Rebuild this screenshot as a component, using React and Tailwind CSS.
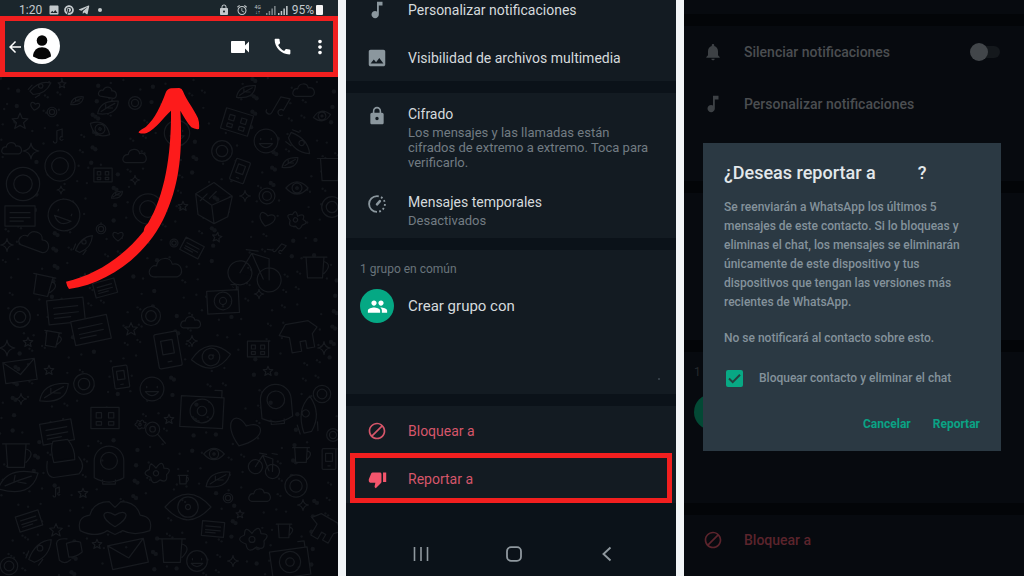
import {
  MdArrowBack, MdVideocam, MdCall, MdMoreVert, MdMusicNote, MdImage, MdLock,
  MdBlock, MdThumbDown, MdGroup, MdNotifications, MdAlarm,
} from "react-icons/md";
import { FaTelegramPlane, FaPinterest } from "react-icons/fa";

/* ---------- chat wallpaper ---------- */

const SHAPES = {
  star: "M0-9L2.5-3 9-2.5 4 2 6 8.500 0 5-6 8.500-4 2-9-2.500-2.500-3z",
  spark: "M0-9Q1-1 9 0Q1 1 0 9Q-1 1-9 0Q-1-1 0-9z",
  heart: "M0 7C-12-1-7-9 0-3C7-9 12-1 0 7z",
  ring: "M-9 0a9 9 0 1 0 18 0a9 9 0 1 0-18 0M-5 0a5 5 0 1 0 10 0a5 5 0 1 0-10 0",
  face: "M-9 0a9 9 0 1 0 18 0a9 9 0 1 0-18 0M-4-2v1M4-2v1M-5 2Q0 8 5 2z",
  cloud: "M-8 5C-13 4-10-3-6-2C-5-8 3-8 4-3C10-5 12 4 7 5z",
  card: "M-9-6h18v12h-18zM-6-2h12M-6 1h12M-6 3h8",
  mail: "M-9-6h18v12h-18zM-9-6L0 2 9-6",
  phone: "M-5-9h10q1 0 1 1v16q0 1-1 1h-10q-1 0-1-1v-16q0-1 1-1zM-3-5h6v7h-6zM-1 6h2",
  camera: "M-9-6h18v13h-18zM-5 0a5 5 0 1 0 10 0a5 5 0 1 0-10 0M-2 0a2 2 0 1 0 4 0a2 2 0 1 0-4 0M5-9h3v3",
  cup: "M-6-6h12l-1 14h-10zM-8-6h16M6-3q6 2 0 8",
  diamond: "M0-9L8-3 6 6 0 9-7 5-8-4zM-8-4L-1 1 8-3M-1 1L0 9M-3-4l-3 3M1-5l-3 3",
  bike: "M-9 3a4 4 0 1 0 8 0a4 4 0 1 0-8 0M1 4a4 4 0 1 0 8 0a4 4 0 1 0-8 0M-5 3L-2-4 4-3 5 4M-2-4l5 8M-4-5h4M3-6h3",
  leaf: "M-9 5Q-7-7 9-6Q8 7-9 5zM-6 3Q0-1 6-4M-2 0v-3M0 0h4",
  eye: "M-9 0Q0-10 9 0Q0 10-9 0zM-4 0a4 4 0 1 0 8 0a4 4 0 1 0-8 0M-1 0a1 1 0 1 0 2 0a1 1 0 1 0-2 0",
  astro: "M-7 7v-8a7 7 0 0 1 14 0v8q-7 4-14 0zM-4-1a4 4 0 1 0 8 0a4 4 0 1 0-8 0M-3 8v2h6v-2",
  hat: "M-4-9h7q3 5 2 10h-10q-1-7 1-10zM-8 0q-2 7 2 8h12q4-3 1-8",
  flower: "M0-3q5-7 6 0q7 0 2 5q1 7-5 4q-6 5-7-2q-8-3-1-6q0-7 5-1zM-2 1a2 2 0 1 0 4 0a2 2 0 1 0-4 0",
  glass: "M-6-2a5 5 0 1 0 10 0a5 5 0 1 0-10 0M-3-2a2 2 0 1 0 4 0a2 2 0 1 0-4 0M3 2l5 6",
  game: "M-8-6h16v12h-16zM-5-3h3v3h-3zM2-3h3v3h-3zM-5 2h3v2h-3zM2 2h3v2h-3z",
  rocket: "M-8 6Q-3-7 8-8Q7 4-4 8zM-2-2a2 2 0 1 0 4 0a2 2 0 1 0-4 0M-8 0l-2 5M2 6l-3 4",
  shirt: "M-6-7h12l4 4-3 3v7h-4v-4h-3v5h-5v-8l-5-2z",
  note: "M-3 6a2 2 0 1 0 4 0v-12l6-2v9a2 2 0 1 0 1 3",
  hands: "M-18 6Q-20-1-13-2Q-11-9-3-9L0-6 3-9Q11-9 13-2Q20-1 18 6Q10 9 4 6L0 8-4 6Q-10 10-18 6zM0 4C-9-1-6-6 0-2C6-6 9-1 0 4z",
};

const DOODLES = [
  ["star", 62, 84, 0.5, 0], ["rocket", 40, 88, 1.2, 20], ["cloud", 108, 93, 1, 10], ["leaf", 108, 108, 1.3, 0], ["ring", 135, 103, 0.8, 0],
  ["star", 20, 121, 1, 0], ["ring", 52, 112, 0.6, 0], ["heart", 35, 106, 0.7, 10], ["eye", 100, 129, 1.4, 30], ["note", 56, 136, 1, 0],
  ["cloud", 12, 149, 1.1, 0], ["spark", 31, 151, 1, 0], ["ring", 60, 166, 1.9, 0], ["cloud", 135, 157, 1.3, 0], ["game", 103, 175, 1.3, 0],
  ["ring", 23, 184, 2.1, 0], ["spark", 61, 190, 0.5, 0], ["card", 20, 216, 1.9, 0], ["face", 64, 215, 2, 20], ["ring", 148, 209, 1.9, 0],
  ["spark", 135, 180, 0.6, 0], ["leaf", 117, 195, 0.7, 0], ["heart", 118, 236, 0.8, 0], ["ring", 101, 229, 0.6, 0], ["rocket", 84, 244, 1.2, 0],
  ["spark", 7, 245, 0.8, 0], ["cloud", 35, 242, 1.7, 20], ["cup", 43, 284, 1.6, 12], ["card", 105, 288, 1.4, -15], ["star", 85, 278, 0.6, 0],
  ["cloud", 166, 269, 1.8, 0], ["card", 192, 248, 1.3, 28], ["ring", 174, 243, 0.5, 0], ["star", 183, 206, 0.6, 0], ["diamond", 214, 203, 2.6, 0],
  ["spark", 245, 196, 0.7, 0], ["ring", 267, 196, 1, 0], ["heart", 267, 219, 1.2, 15], ["eye", 297, 188, 1.4, 0], ["flower", 296, 219, 1.2, 30],
  ["phone", 240, 171, 1.4, 20], ["ring", 222, 151, 1.3, 0], ["game", 237, 122, 2, 17], ["face", 266, 141, 1.5, 0], ["note", 275, 104, 1.7, 30],
  ["leaf", 246, 92, 1.2, 0], ["cloud", 304, 91, 1.2, 0], ["eye", 322, 116, 1.1, -10], ["rocket", 299, 143, 1.5, 90], ["leaf", 290, 163, 1, 0],
  ["cup", 330, 168, 1.8, 0], ["ring", 332, 207, 1.3, 0], ["bike", 256, 266, 3.4, 8], ["spark", 259, 294, 0.6, 0], ["camera", 223, 301, 2, -3],
  ["cup", 315, 266, 1.7, 0], ["note", 278, 247, 0.9, 40], ["star", 217, 237, 0.6, 10], ["face", 177, 133, 1.6, 0], ["leaf", 77, 101, 0.8, 0],
  ["ring", 20, 317, 1.3, 0], ["card", 66, 311, 2.3, -6], ["card", 91, 330, 2.3, -12], ["star", 131, 329, 0.8, 0], ["ring", 151, 316, 1.2, 0],
  ["cloud", 191, 323, 1.1, 0], ["cup", 52, 338, 1.2, 10], ["spark", 7, 348, 1, 0], ["star", 28, 342, 0.6, 0], ["mail", 20, 371, 2, -8],
  ["star", 49, 370, 0.6, 0], ["phone", 121, 377, 1.4, -8], ["phone", 168, 350, 2.2, -10], ["spark", 192, 341, 0.7, 0], ["eye", 211, 357, 2.5, -8],
  ["game", 258, 349, 1.5, 0], ["shirt", 299, 336, 2.2, -10], ["spark", 324, 348, 0.8, 0], ["star", 268, 371, 0.6, 0], ["ring", 322, 394, 1.1, 0],
  ["face", 152, 389, 1.5, 0], ["leaf", 54, 393, 1.8, 0], ["ring", 84, 384, 1.3, 30], ["spark", 21, 399, 0.7, 0], ["camera", 202, 411, 2.7, 3],
  ["heart", 244, 432, 2.4, 20], ["astro", 276, 402, 2.5, -5], ["rocket", 308, 416, 2, -40], ["card", 57, 432, 2, -10], ["game", 105, 418, 2, 0],
  ["glass", 154, 432, 1.6, 0], ["flower", 140, 424, 0.7, 0], ["star", 169, 419, 0.6, 0], ["cup", 16, 454, 1.9, 0], ["hat", 64, 459, 2.4, -8],
  ["astro", 109, 463, 2.4, 0], ["flower", 156, 472, 1.5, 0], ["eye", 214, 454, 1.3, 0], ["cup", 183, 479, 0.7, 0], ["leaf", 218, 480, 1.5, 0],
  ["bike", 265, 463, 2, 10], ["cup", 301, 454, 1.2, 0], ["phone", 329, 459, 1.3, 0], ["leaf", 18, 482, 2.3, 10], ["star", 83, 493, 0.6, 0],
  ["note", 55, 492, 0.7, 0], ["cloud", 260, 496, 1.2, 0], ["ring", 296, 486, 1.4, 0], ["spark", 303, 505, 0.7, 0], ["ring", 228, 498, 0.6, 0],
  ["hands", 115, 519, 2.2, 0], ["eye", 188, 507, 2.9, 0], ["card", 29, 521, 1.5, -18], ["star", 56, 530, 0.8, 0],
  ["flower", 252, 538, 1.7, 0], ["card", 213, 529, 1.4, 5], ["cup", 284, 530, 1.1, 0], ["shirt", 324, 528, 1.8, 30], ["mail", 128, 554, 2.3, -12],
  ["hat", 69, 550, 1.6, 80], ["cup", 172, 549, 1.9, 0], ["face", 197, 561, 1.3, 0], ["camera", 290, 562, 2.4, -8], ["star", 97, 544, 0.6, 0],
  ["rocket", 40, 551, 1.6, 0], ["ring", 9, 566, 1.1, 0], ["spark", 233, 561, 0.7, 0], ["star", 240, 514, 0.5, 0], ["ring", 333, 435, 0.8, 0],
];

const DOTS = Array.from({ length: 760 }, (_, i) => ({
  x: (i * 73.13 + (i % 7) * 11) % 338,
  y: 78 + ((i * 41.77 + (i % 11) * 17) % 498),
  r: i % 4 === 0 ? 2.2 : 1.2,
}));

function Wallpaper() {
  return (
    <svg viewBox="0 77 338 499" preserveAspectRatio="xMidYMin slice" className="absolute inset-0 size-full" aria-hidden="true">
      <g fill="#12151a">
        {DOTS.map((d, i) => <circle key={i} cx={d.x} cy={d.y} r={d.r} />)}
      </g>
      <g fill="#06080d" stroke="#171a1f" strokeLinejoin="round" strokeLinecap="round">
        {DOODLES.map(([name, x, y, s, a], i) => (
          <path key={i} d={SHAPES[name]} strokeWidth={1.4 / s} transform={`translate(${x} ${y}) rotate(${a}) scale(${s * 0.88})`} />
        ))}
      </g>
    </svg>
  );
}

function PointerArrow() {
  return (
    <svg viewBox="180 42 432 624" className="absolute left-[60px] top-[7px] h-[208px] w-36" aria-hidden="true">
      <path
        fill="#fd1b1b"
        d="M198 635C290 615 375 555 431 484C432 474 436 466 444 460C496 372 514 250 513 122C490 143 468 176 440 189Q428 193 416 188C416 182 426 178 438 170C466 144 482 108 497 68Q501 57 513 55L538 54Q546 55 549 64C559 91 580 114 594 145Q599 160 597 177Q585 179 574 172C563 160 551 140 541 122C550 270 530 360 496 435C445 550 330 640 207 657Q200 647 198 635z"
      />
    </svg>
  );
}

/* ---------- small drawings ---------- */

function TimerIcon() {
  return (
    <svg viewBox="0 0 24 24" className="size-5" fill="none" stroke="currentColor" strokeWidth="2.200" aria-hidden="true">
      <path d="M12 2.500a9.500 9.500 0 0 0 0 19" />
      <path d="M12 2.500a9.500 9.500 0 0 1 0 19" strokeDasharray="2.200 2.770" />
      <path d="M12 12.500L15.500 8.500" strokeWidth="3" strokeLinecap="round" />
    </svg>
  );
}

function Avatar() {
  return (
    <svg viewBox="0 0 36 36" className="size-9 shrink-0" aria-hidden="true">
      <circle cx="18" cy="18" r="18" fill="#fff" />
      <circle cx="18" cy="12.500" r="5.300" fill="#060606" />
      <path d="M9 28.500C9 16 27 16 27 28.500Q18 34 9 28.500z" fill="#060606" />
    </svg>
  );
}

function SignalBars() {
  return (
    <svg viewBox="0 0 10 10" className="size-[10px]" fill="currentColor" aria-hidden="true">
      <path d="M0 8h1.500v2H0zM2.700 6h1.500v4H2.700zM5.400 3.500h1.500V10H5.400zM8.100 1h1.500v9H8.100z" />
    </svg>
  );
}

/* ---------- screens ---------- */

function ChatScreen() {
  return (
    <section className="flex min-w-0 flex-col bg-[#06080d]">
      <div className="flex h-4 items-start justify-between bg-[#1b262c] pl-[19px] pr-[15px] text-xs leading-5 text-[#c3c9cc]">
        <div className="flex items-center gap-1">
          <span className="mr-0.5">1:20</span>
          <MdImage className="size-3" />
          <FaPinterest className="size-[10px]" />
          <FaTelegramPlane className="size-3" />
          <span className="ml-1 size-1 rounded-full bg-current" />
        </div>
        <div className="flex items-center gap-0.5">
          <MdLock className="size-3" />
          <MdAlarm className="ml-1 size-3" />
          <span className="ml-0.5 flex w-3 flex-col text-center text-[5px] leading-[5px]"><span>4G</span><span>↓↑</span></span>
          <span className="opacity-60"><SignalBars /></span>
          <SignalBars />
          <span className="ml-0.5">95%</span>
          <span className="h-[10px] w-[7px] rounded-[1px] bg-[#f4f4f4]" />
        </div>
      </div>
      <header className="flex h-[61px] items-center border-[5px] border-[#f21f1f] bg-[#1f2a31] pl-px pr-0.5 text-white">
        <button type="button" aria-label="Atrás"><MdArrowBack className="size-[18px]" /></button>
        <button type="button" aria-label="Contacto" className="mb-0.5"><Avatar /></button>
        <div className="ml-auto flex items-center">
          <button type="button" aria-label="Videollamada"><MdVideocam className="size-6" /></button>
          <button type="button" aria-label="Llamar" className="ml-5"><MdCall className="size-[21px]" /></button>
          <button type="button" aria-label="Más opciones" className="ml-4"><MdMoreVert className="size-[22px]" /></button>
        </div>
      </header>
      <div className="relative flex-1 overflow-hidden">
        <Wallpaper />
        <PointerArrow />
      </div>
    </section>
  );
}

function Row({ icon, title, children, className = "" }) {
  return (
    <button type="button" className={`flex w-full items-start text-left ${className}`}>
      <span className="flex h-5 w-[62px] shrink-0 items-center justify-center text-[#8b979e]">{icon}</span>
      <span className="block min-w-0 flex-1">
        <span className="block text-sm leading-5 text-[#d5dadd]">{title}</span>
        {children && <span className="mt-px block text-[13px] leading-[15px] text-[#727c83]">{children}</span>}
      </span>
    </button>
  );
}

function ContactScreen() {
  return (
    <section className="flex min-w-0 flex-col gap-3 bg-[#0b1219]">
      <div className="flex flex-col gap-7 bg-[#131b22] pb-[13px]">
        <Row icon={<MdMusicNote className="size-[22px]" />} title="Personalizar notificaciones" />
        <Row icon={<MdImage className="size-[22px]" />} title="Visibilidad de archivos multimedia" />
      </div>
      <div className="flex flex-col gap-[22px] bg-[#131b22] pb-[10px] pr-5 pt-[11px]">
        <Row icon={<MdLock className="mt-1 size-5" />} title="Cifrado">
          Los mensajes y las llamadas están cifrados de extremo a extremo. Toca para verificarlo.
        </Row>
        <Row icon={<span className="mt-1"><TimerIcon /></span>} title="Mensajes temporales">Desactivados</Row>
      </div>
      <div className="relative h-36 bg-[#131b22] pt-[11px]">
        <h2 className="px-[14px] text-xs leading-4 text-[#69747b]">1 grupo en común</h2>
        <button type="button" className="mt-3 flex w-full items-center pl-[14px] text-left text-[15px] leading-5 text-[#d5dadd]">
          <span className="mr-[14px] flex size-[34px] items-center justify-center rounded-full bg-[#05a884] text-white">
            <MdGroup className="size-[21px]" />
          </span>
          Crear grupo con
        </button>
        <span className="absolute bottom-[14px] right-4 size-[2px] rounded-full bg-[#3f4a52]" />
      </div>
      <div className="flex flex-col bg-[#131b22]">
        <button type="button" className="flex h-[47px] items-center pt-[3px] text-left text-sm text-[#d6566a]">
          <span className="flex w-[62px] justify-center"><MdBlock className="size-5" /></span>
          Bloquear a
        </button>
        <button type="button" className="mx-1 flex h-[50px] items-center border-[5px] border-[#f21f1f] pt-0.5 text-left text-sm text-[#d6566a]">
          <span className="mr-[9px] flex w-11 justify-center text-[#f3556c]"><MdThumbDown className="size-[19px]" /></span>
          Reportar a
        </button>
      </div>
      <nav className="grid grid-cols-3 items-center justify-items-center pb-1 pl-[29px] pr-[23px] pt-[31px] text-[#8f989e]" aria-label="Navegación">
        <button type="button" aria-label="Recientes">
          <svg viewBox="0 0 16 16" className="size-4" stroke="currentColor" strokeWidth="1.600" aria-hidden="true"><path d="M1.500 1v14M8 1v14M14.500 1v14" /></svg>
        </button>
        <button type="button" aria-label="Inicio">
          <svg viewBox="0 0 16 16" className="size-4" fill="none" stroke="currentColor" strokeWidth="1.800" aria-hidden="true"><rect x="1" y="1.200" width="14" height="13.600" rx="4" /></svg>
        </button>
        <button type="button" aria-label="Atrás">
          <svg viewBox="0 0 16 16" className="size-4" fill="none" stroke="currentColor" strokeWidth="1.900" aria-hidden="true"><path d="M11.500 1.500L4.500 8l7 6.500" /></svg>
        </button>
      </nav>
    </section>
  );
}

function DimRow({ icon, children, className = "" }) {
  return (
    <div className={`flex h-5 items-center text-sm font-medium leading-5 ${className}`}>
      <span className="flex w-[57px] shrink-0 justify-center">{icon}</span>
      {children}
    </div>
  );
}

function ReportScreen() {
  return (
    <section className="relative flex min-w-0 flex-col gap-3 bg-[#030508] text-[#4b4e51]">
      <div className="h-[14px] bg-[#070a0f]" />
      <div className="flex h-[155px] flex-col gap-8 bg-[#070a0f] pt-4">
        <DimRow icon={<MdNotifications className="size-5 text-[#3d4145]" />}>
          <label htmlFor="mute" className="pl-[3px]">Silenciar notificaciones</label>
          <span className="relative ml-auto mr-6 flex h-[18px] w-[30px] items-center">
            <input id="mute" type="checkbox" role="switch" className="absolute inset-0 m-0 appearance-none" />
            <span className="pointer-events-none ml-auto h-3 w-6 rounded-full bg-[#14181c]" />
            <span className="pointer-events-none absolute left-0 size-[18px] rounded-full bg-[#42464a]" />
          </span>
        </DimRow>
        <DimRow icon={<MdMusicNote className="size-[22px] text-[#3d4145]" />}>
          <span className="pl-[3px]">Personalizar notificaciones</span>
        </DimRow>
      </div>
      <div className="h-[147px] bg-[#070a0f]" />
      <div className="h-[151px] bg-[#070a0f] pl-[10px] pt-3">
        <p className="text-xs leading-4 text-[#25292d]">1</p>
        <span className="mt-[14px] block size-9 rounded-full bg-[#034935]" />
      </div>
      <div className="flex-1 bg-[#070a0f] pb-[26px] pt-[15px]">
        <DimRow icon={<MdBlock className="size-5" />} className="text-[#5b242c]"><span className="pl-[3px]">Bloquear a</span></DimRow>
      </div>

      <div role="dialog" aria-labelledby="report-title" className="absolute left-[19px] right-[23px] top-[143px] bg-[#2b3943] px-[21px] pb-[17px] pt-[18px] text-[#84929b]">
        <h1 id="report-title" className="flex gap-[42px] text-lg font-medium leading-6 text-[#e3e8eb]">
          <span>¿Deseas reportar a</span><span>?</span>
        </h1>
        <div className="mt-[13px] flex flex-col gap-[17px] text-xs font-medium leading-[19px]">
          <p>Se reenviarán a WhatsApp los últimos 5 mensajes de este contacto. Si lo bloqueas y eliminas el chat, los mensajes se eliminarán únicamente de este dispositivo y tus dispositivos que tengan las versiones más recientes de WhatsApp.</p>
          <p>No se notificará al contacto sobre esto.</p>
        </div>
        <div className="mt-5 flex items-center text-xs font-medium leading-5">
          <span className="relative ml-0.5 mr-4 flex size-[17px]">
            <input id="block" type="checkbox" defaultChecked className="m-0 size-[17px] appearance-none rounded-[2px] bg-[#08a884]" />
            <svg viewBox="0 0 17 17" className="pointer-events-none absolute inset-0" fill="none" stroke="#24423f" strokeWidth="2" aria-hidden="true"><path d="M3 8.500l3.700 3.700L14 4.800" /></svg>
          </span>
          <label htmlFor="block">Bloquear contacto y eliminar el chat</label>
        </div>
        <div className="mt-[26px] flex justify-end gap-[22px] text-xs font-bold leading-5 text-[#0aa385]">
          <button type="button">Cancelar</button>
          <button type="button">Reportar</button>
        </div>
      </div>
    </section>
  );
}

export default function App() {
  return (
    <main className="grid min-h-screen grid-cols-[338fr_330fr_340fr] gap-2 bg-[#f2f5f7] font-['Roboto',sans-serif]">
      <ChatScreen />
      <ContactScreen />
      <ReportScreen />
    </main>
  );
}
